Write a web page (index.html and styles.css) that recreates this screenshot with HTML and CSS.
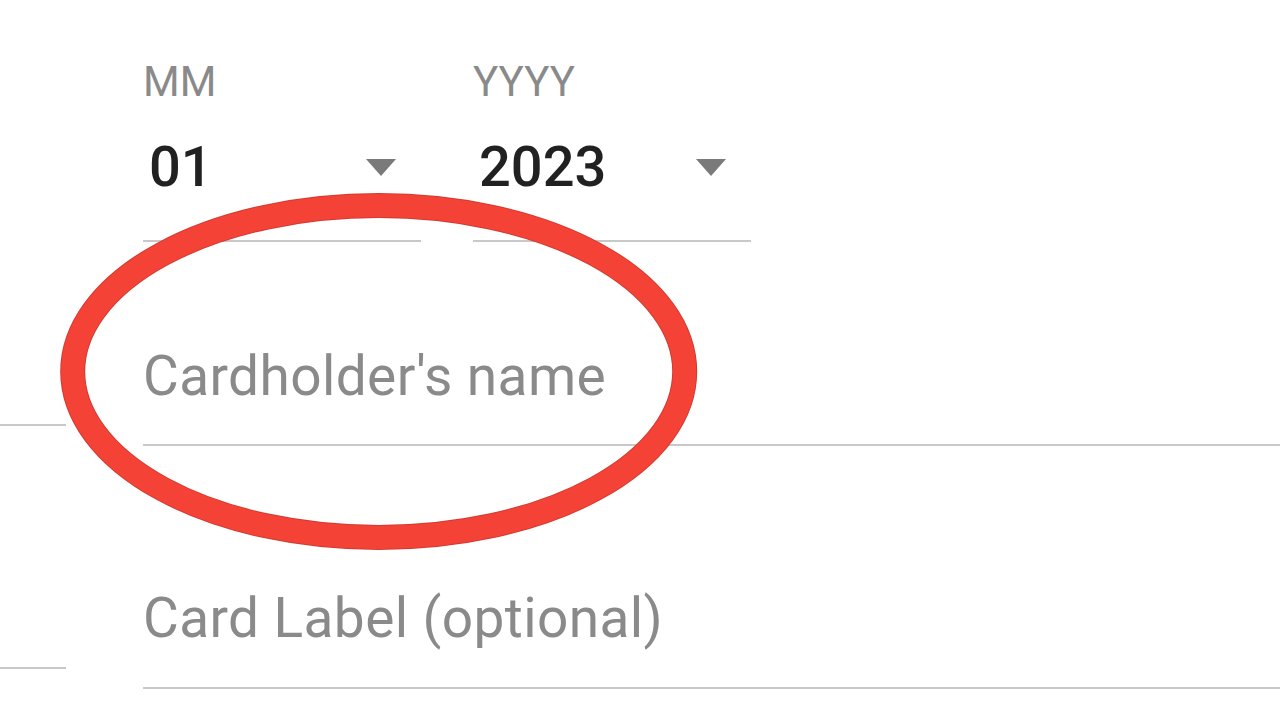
FILE: index.html
```html
<!DOCTYPE html>
<html lang="en">
<head>
<meta charset="utf-8">
<title>Card details</title>
<link rel="stylesheet" href="styles.css">
</head>
<body>
<div class="page">
  <div class="row">
    <div class="stub-col"></div>
    <div class="expiry-fields">
      <div class="select-field">
        <div class="label">MM</div>
        <div class="select"><span class="value">01</span><span class="caret"></span></div>
      </div>
      <div class="select-field">
        <div class="label">YYYY</div>
        <div class="select"><span class="value">2023</span><span class="caret"></span></div>
      </div>
    </div>
  </div>
  <div class="row">
    <div class="stub"></div>
    <div class="text-field name-field"><span class="placeholder">Cardholder's name</span></div>
  </div>
  <div class="row">
    <div class="stub"></div>
    <div class="text-field label-field"><span class="placeholder">Card Label (optional)</span></div>
  </div>
  <svg class="highlight" width="1280" height="720" viewBox="0 0 1280 720" aria-hidden="true">
    <ellipse cx="378.7" cy="371.5" rx="306" ry="166" fill="none" stroke="#d23a30" stroke-width="25"/>
    <ellipse cx="378.7" cy="371.5" rx="306" ry="166" fill="none" stroke="#f44336" stroke-width="23"/>
  </svg>
</div>
</body>
</html>
```

FILE: styles.css
```css
html, body {
  margin: 0;
  padding: 0;
  background: #ffffff;
}

body {
  font-family: Roboto, "Noto Sans", sans-serif;
}

.page {
  position: relative;
  width: 1280px;
  height: 720px;
  overflow: hidden;
  background: #ffffff;
}

.row {
  display: grid;
  grid-template-columns: 66px 1fr;
  column-gap: 77px;
}

.stub {
  align-self: end;
  margin-bottom: 20px;
  border-bottom: 2px solid #c8c8c8;
}

.expiry-fields {
  display: flex;
  gap: 52px;
  padding-top: 61px;
}

.select-field {
  width: 278px;
}

.label {
  font-size: 42px;
  line-height: 42px;
  height: 42px;
  color: #8a8a8a;
}

.select {
  display: flex;
  align-items: center;
  justify-content: space-between;
  margin-top: 36px;
  padding: 0 25px 45px 6px;
  border-bottom: 2px solid #c8c8c8;
}

.value {
  font-size: 56px;
  line-height: 56px;
  font-weight: 500;
  color: #212121;
}

.caret {
  width: 0;
  height: 0;
  border-left: 15px solid transparent;
  border-right: 15px solid transparent;
  border-top: 17px solid #7a7a7a;
}

.text-field {
  border-bottom: 2px solid #c8c8c8;
}

.name-field {
  padding: 107px 0 40px 0;
}

.label-field {
  padding: 145px 0 41px 0;
}

.placeholder {
  display: block;
  font-size: 55px;
  line-height: 55px;
  height: 55px;
  letter-spacing: 0.4px;
  color: #8a8a8a;
}

.highlight {
  position: absolute;
  left: 0;
  top: 0;
  pointer-events: none;
}
```
